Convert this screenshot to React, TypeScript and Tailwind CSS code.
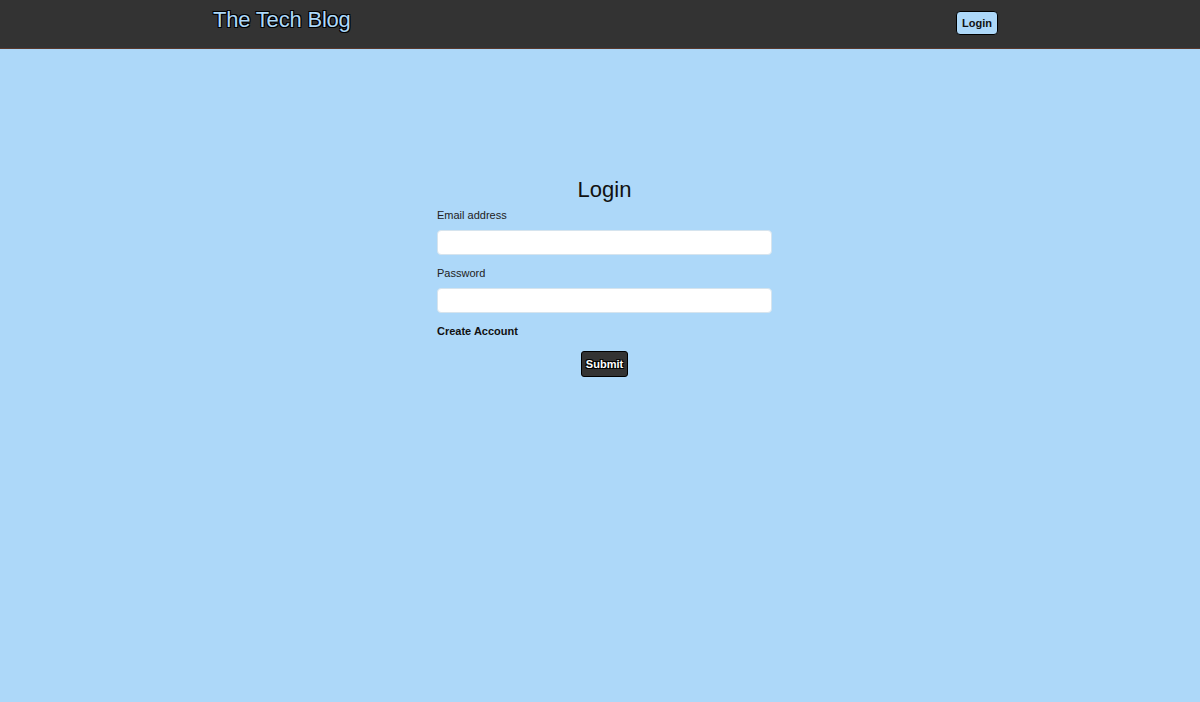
import React from 'react';

export default function App() {
  return (
    <div className="min-h-[702px] bg-[#add8f9] font-['Liberation_Sans',Arial,sans-serif]">
      <header className="h-[49px] bg-[#333333] border-b border-[#5a3a2e]">
        <div className="ml-[213px] w-[785px] flex items-start justify-between">
          <h1
            className="mt-[6px] text-[22px] leading-[28px] text-[#add8f9] tracking-[-0.2px]"
            style={{ textShadow: '-1px -1px 0 #000, 1px -1px 0 #000, -1px 1px 0 #000, 1px 1px 0 #000' }}
          >
            The Tech Blog
          </h1>
          <button className="mt-[11px] h-[24px] px-[5px] rounded-[4px] border border-black bg-[#add8f9] text-[11px] font-bold text-[#111]">
            Login
          </button>
        </div>
      </header>

      <main className="ml-[437px] w-[335px] pt-[128px]">
        <h2 className="text-center text-[22px] leading-[26px] text-[#111]">Login</h2>
        <form className="flex flex-col">
          <label className="mt-[5px] text-[11px] leading-[14px] text-[#222]">Email address</label>
          <input
            type="email"
            className="mt-[8px] h-[25px] rounded-[4px] border border-[#d6e4ee] bg-white"
          />
          <label className="mt-[11px] text-[11px] leading-[14px] text-[#222]">Password</label>
          <input
            type="password"
            className="mt-[8px] h-[25px] rounded-[4px] border border-[#d6e4ee] bg-white"
          />
          <span className="mt-[11px] text-[11px] leading-[14px] font-bold text-[#111]">Create Account</span>
          <div className="mt-[13px] flex justify-center">
            <button
              type="button"
              className="h-[26px] px-[4px] rounded-[3px] border border-black bg-[#333333] text-[11px] font-bold text-white"
              style={{ textShadow: '-1px -1px 0 #000, 1px -1px 0 #000, -1px 1px 0 #000, 1px 1px 0 #000' }}
            >
              Submit
            </button>
          </div>
        </form>
      </main>
    </div>
  );
}
